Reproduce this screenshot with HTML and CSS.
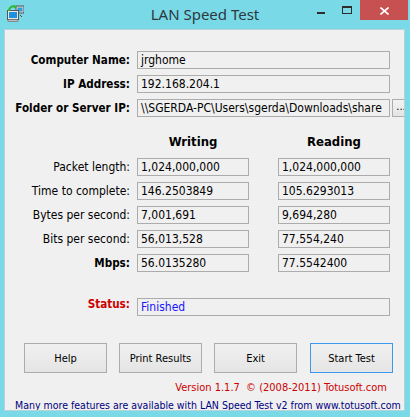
FILE: index.html
```html
<!DOCTYPE html>
<html>
<head>
<meta charset="utf-8">
<link rel="stylesheet" href="styles.css">
</head>
<body>
<div class="window">
  <div class="titlebar">
    <svg class="app-icon" width="17" height="17" viewBox="0 0 17 17">
      <rect x="9" y="1" width="8" height="7" fill="#d8d8d8" stroke="#555" stroke-width="1"/>
      <rect x="10.5" y="2.5" width="5" height="4" fill="#2aa0e0"/>
      <rect x="0.5" y="5.5" width="11" height="9" fill="#e8e8e8" stroke="#555" stroke-width="1"/>
      <rect x="2" y="7" width="8" height="6" fill="#1e90e0"/>
      <rect x="1" y="14.5" width="10" height="2" fill="#bdbdbd" stroke="#666" stroke-width="0.6"/>
      <path d="M2 6 C2 2 5 1 8 1.5" fill="none" stroke="#2db82d" stroke-width="2"/>
      <path d="M7 0 L10 1.8 L7 3.6 Z" fill="#2db82d"/>
      <rect x="13" y="10" width="1" height="1" fill="#444"/>
      <rect x="14" y="11" width="1" height="1" fill="#444"/>
    </svg>
    <div class="title">LAN Speed Test</div>
    <div class="controls">
      <span class="ctl min"><i></i></span>
      <span class="ctl max"><i></i></span>
      <span class="ctl close">
        <svg width="9" height="8" viewBox="0 0 9 8"><path d="M0.5 0.5 L8.5 7.5 M8.5 0.5 L0.5 7.5" stroke="#fff" stroke-width="1.6"/></svg>
      </span>
    </div>
  </div>
  <div class="client">
    <div class="info">
      <div class="row">
        <span class="label bold">Computer Name:</span>
        <span class="box wide">jrghome</span>
      </div>
      <div class="row">
        <span class="label bold">IP Address:</span>
        <span class="box wide">192.168.204.1</span>
      </div>
      <div class="row">
        <span class="label bold">Folder or Server IP:</span>
        <span class="box wide">\\SGERDA-PC\Users\sgerda\Downloads\share</span>
        <span class="browse">...</span>
      </div>
    </div>
    <div class="stats">
      <div class="heads">
        <span class="head">Writing</span>
        <span class="head second">Reading</span>
      </div>
      <div class="row">
        <span class="label">Packet length:</span>
        <span class="box narrow">1,024,000,000</span>
        <span class="box narrow second">1,024,000,000</span>
      </div>
      <div class="row">
        <span class="label">Time to complete:</span>
        <span class="box narrow">146.2503849</span>
        <span class="box narrow second">105.6293013</span>
      </div>
      <div class="row">
        <span class="label">Bytes per second:</span>
        <span class="box narrow">7,001,691</span>
        <span class="box narrow second">9,694,280</span>
      </div>
      <div class="row">
        <span class="label">Bits per second:</span>
        <span class="box narrow">56,013,528</span>
        <span class="box narrow second">77,554,240</span>
      </div>
      <div class="row">
        <span class="label bold">Mbps:</span>
        <span class="box narrow">56.0135280</span>
        <span class="box narrow second">77.5542400</span>
      </div>
    </div>
    <div class="row status">
      <span class="label bold red">Status:</span>
      <span class="box wide blue">Finished</span>
    </div>
    <div class="buttons">
      <span class="btn">Help</span>
      <span class="btn">Print Results</span>
      <span class="btn">Exit</span>
      <span class="btn default">Start Test</span>
    </div>
    <div class="version"><span>Version 1.1.7&nbsp; © (2008-2011) Totusoft.com</span></div>
    <div class="promo">Many more features are available with LAN Speed Test v2 from www.totusoft.com</div>
  </div>
</div>
</body>
</html>
```

FILE: styles.css
```css
* { box-sizing: border-box; }
body {
  margin: 0;
  width: 410px;
  height: 417px;
  overflow: hidden;
  background: #79d9e7;
  font-family: "DejaVu Sans", sans-serif;
}
.window {
  width: 410px;
  height: 417px;
  display: flex;
  flex-direction: column;
}
.titlebar {
  height: 29px;
  flex: none;
  display: grid;
  grid-template-columns: 1fr auto 1fr;
  align-items: start;
}
.app-icon {
  margin: 5px 0 0 7px;
}
.title {
  font-family: "Noto Sans", sans-serif;
  font-size: 15px;
  line-height: 28px;
  color: #2b3a3f;
  white-space: nowrap;
}
.controls {
  justify-self: end;
  display: flex;
  margin-right: 2px;
}
.ctl {
  height: 20px;
  width: 26px;
  display: flex;
  justify-content: center;
  align-items: flex-start;
}
.min i {
  display: block;
  width: 8px;
  height: 2px;
  margin-top: 12px;
  background: #2d2d2d;
}
.max i {
  display: block;
  width: 10px;
  height: 8px;
  margin-top: 6px;
  border: 1px solid #2d2d2d;
  border-top-width: 2px;
}
.close {
  width: 48px;
  background: #c75050;
  align-items: center;
}
.close svg { display: block; margin-top: 1px; }

.client {
  flex: 1;
  width: 401px;
  margin: 0 5px 6px 4px;
  border: 1px solid #b7d2d8;
  background: #f0f0f0;
  overflow: hidden;
  font-family: "DejaVu Sans Condensed", "DejaVu Sans", sans-serif;
  font-size: 12px;
  color: #000;
}
.row {
  display: flex;
  align-items: center;
  height: 18px;
}
.label {
  width: 125px;
  margin-right: 7px;
  text-align: right;
  white-space: nowrap;
  flex: none;
}
.bold { font-weight: bold; font-size: 11.6px; }
.red { color: #cc0000; }
.blue { color: #1515ff; }
.box {
  height: 18px;
  border: 1px solid #acacac;
  background: #f0f0f0;
  padding-left: 3px;
  line-height: 16px;
  white-space: nowrap;
  overflow: hidden;
  flex: none;
}
.box.wide { width: 253px; }
.box.narrow { width: 112px; }
.box.second { margin-left: 29px; }
.info {
  margin-top: 21px;
  display: flex;
  flex-direction: column;
  gap: 6px;
}
.browse {
  flex: none;
  width: 18px;
  height: 18px;
  margin-left: 2px;
  border: 1px solid #acacac;
  background: linear-gradient(#f2f2f2, #e4e4e4);
  font-size: 11px;
  line-height: 14px;
  text-align: center;
}
.stats {
  margin-top: 17px;
  display: flex;
  flex-direction: column;
  gap: 6px;
}
.heads {
  display: flex;
  padding-left: 132px;
  height: 16px;
  margin-bottom: 2px;
}
.head {
  width: 112px;
  text-align: center;
  font-weight: bold;
  font-size: 13px;
  line-height: 16px;
}
.head.second { margin-left: 29px; }
.status { margin-top: 26px; align-items: flex-start; }
.status .label { line-height: 13px; }
.buttons {
  margin-top: 27px;
  padding-left: 19px;
  display: flex;
  gap: 12px;
}
.btn, .version, .promo {
  font-family: "DejaVu Sans Condensed", "DejaVu Sans", sans-serif;
  font-size: 11px;
}
.btn {
  width: 83px;
  height: 30px;
  border: 1px solid #acacac;
  background: linear-gradient(#f0f0f0, #e5e5e5);
  display: flex;
  align-items: center;
  justify-content: center;
}
.btn.default {
  border-color: #3c98ef;
  margin-left: 1px;
}
.version {
  margin-top: 8px;
  padding-right: 17px;
  display: flex;
  justify-content: flex-end;
  color: #cc0000;
  line-height: 14px;
}
.promo {
  margin-top: 3px;
  padding-left: 10px;
  color: #000080;
  font-size: 10.5px;
  line-height: 14px;
  white-space: nowrap;
}
```
